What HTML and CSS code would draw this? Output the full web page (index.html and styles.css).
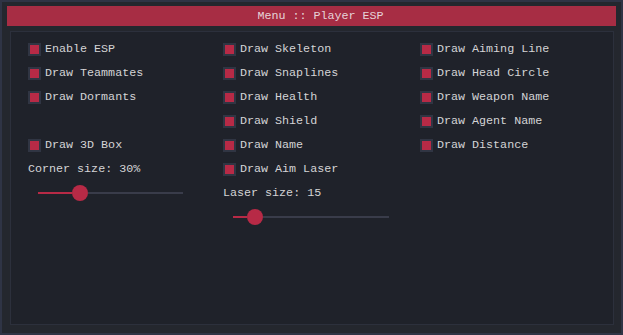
FILE: index.html
```html
<!DOCTYPE html>
<html lang="en">
<head>
    <meta charset="UTF-8">
    <meta name="viewport" content="width=device-width, initial-scale=1.0">
    <title>Menu :: Player ESP</title>
    <link rel="stylesheet" href="styles.css">
</head>
<body>
    <div class="window">
        <div class="titlebar">Menu :: Player ESP</div>

        <div class="panel">
            <div class="columns">
                <div class="col">
                    <div class="row"><span class="check"></span>Enable ESP</div>
                    <div class="row"><span class="check"></span>Draw Teammates</div>
                    <div class="row"><span class="check"></span>Draw Dormants</div>
                    <div class="row"></div>
                    <div class="row"><span class="check"></span>Draw 3D Box</div>
                    <div class="row">Corner size: 30%</div>
                    <div class="row slider wide">
                        <div class="fill" style="width: 34px"></div>
                        <div class="knob"></div>
                        <div class="track"></div>
                    </div>
                </div>

                <div class="col">
                    <div class="row"><span class="check"></span>Draw Skeleton</div>
                    <div class="row"><span class="check"></span>Draw Snaplines</div>
                    <div class="row"><span class="check"></span>Draw Health</div>
                    <div class="row"><span class="check"></span>Draw Shield</div>
                    <div class="row"><span class="check"></span>Draw Name</div>
                    <div class="row"><span class="check"></span>Draw Aim Laser</div>
                    <div class="row">Laser size: 15</div>
                    <div class="row slider">
                        <div class="fill" style="width: 14px"></div>
                        <div class="knob"></div>
                        <div class="track"></div>
                    </div>
                </div>

                <div class="col">
                    <div class="row"><span class="check"></span>Draw Aiming Line</div>
                    <div class="row"><span class="check"></span>Draw Head Circle</div>
                    <div class="row"><span class="check"></span>Draw Weapon Name</div>
                    <div class="row"><span class="check"></span>Draw Agent Name</div>
                    <div class="row"><span class="check"></span>Draw Distance</div>
                </div>
            </div>
        </div>
    </div>
</body>
</html>
```

FILE: styles.css
```css
html, body {
    margin: 0;
    padding: 0;
    height: 100%;
}
body {
    background-color: #24272e;
    font-family: "Liberation Mono", "DejaVu Sans Mono", monospace;
    font-size: 11.7px;
    color: #d4d4d6;
}
.window {
    box-sizing: border-box;
    width: 100%;
    height: 100%;
    padding: 4px 5px 0 5px;
    border: 2px solid #2f3445;
    background-color: #24272e;
}
.titlebar {
    height: 20px;
    line-height: 20px;
    background-color: #a72d44;
    color: #e6d3d8;
    text-align: center;
    padding-left: 18px;
}
.panel {
    box-sizing: border-box;
    margin: 5px 2px 0 3px;
    height: 294px;
    border: 1px solid #2c303c;
    background-color: #1f222a;
    padding: 5px 0 0 17px;
}
.columns {
    display: grid;
    grid-template-columns: 195px 197px 1fr;
}
.row {
    height: 24px;
    display: flex;
    align-items: center;
    white-space: pre;
}
.check {
    box-sizing: border-box;
    width: 13px;
    height: 13px;
    margin-right: 4px;
    border: 2px solid #303543;
    background-color: #b72a46;
}
.slider {
    width: 156px;
    margin-left: 10px;
}
.slider.wide {
    width: 145px;
}
.fill {
    height: 2px;
    background-color: #b72a46;
}
.track {
    flex: 1;
    height: 2px;
    background-color: #393c4a;
}
.knob {
    width: 16px;
    height: 16px;
    border-radius: 50%;
    background-color: #b72a46;
}
```
